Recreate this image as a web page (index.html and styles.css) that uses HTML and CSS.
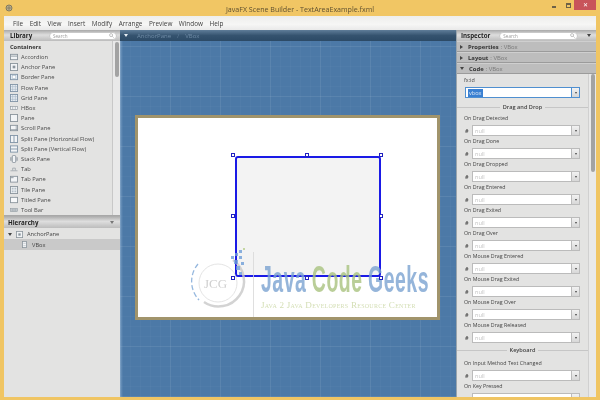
FILE: index.html
```html
<!DOCTYPE html>
<html lang="en">
<head>
<meta charset="utf-8">
<title>JavaFX Scene Builder</title>
<link rel="stylesheet" href="styles.css">
</head>
<body>
<svg class="defs" width="0" height="0">
  <symbol id="i-box" viewBox="0 0 9 9"><rect x=".5" y=".5" width="8" height="8" fill="#f2f4f6" stroke="#8a949c"/></symbol>
  <symbol id="i-acc" viewBox="0 0 9 9"><rect x=".5" y="1.5" width="8" height="6" fill="#f2f4f6" stroke="#8a949c"/><path d="M1 3.5h7" stroke="#8a949c"/></symbol>
  <symbol id="i-anchor" viewBox="0 0 9 9"><rect x=".5" y=".5" width="8" height="8" fill="#f2f4f6" stroke="#8a949c"/><rect x="3" y="3" width="3" height="3" fill="#8a949c"/></symbol>
  <symbol id="i-border" viewBox="0 0 9 9"><rect x=".5" y="1.5" width="8" height="6" fill="#dfe9f2" stroke="#7f93a6"/><rect x="2.5" y="3" width="4" height="3" fill="#fff" stroke="#9fb0bf" stroke-width=".5"/></symbol>
  <symbol id="i-grid" viewBox="0 0 9 9"><rect x=".5" y=".5" width="8" height="8" fill="#e8eef3" stroke="#7f93a6"/><path d="M3 1v7M6 1v7M1 3h7M1 6h7" stroke="#9fb0bf" stroke-width=".6"/></symbol>
  <symbol id="i-hbox" viewBox="0 0 9 9"><rect x=".5" y="3" width="8" height="3" fill="#f2f4f6" stroke="#8a949c" stroke-width=".7"/><path d="M3 3v3M6 3v3" stroke="#8a949c" stroke-width=".6"/></symbol>
  <symbol id="i-scroll" viewBox="0 0 9 9"><rect x=".5" y="1.5" width="8" height="6" fill="#f2f4f6" stroke="#8a949c"/><path d="M1 6.3h7M7 2v5" stroke="#8a949c" stroke-width=".8"/></symbol>
  <symbol id="i-splith" viewBox="0 0 9 9"><rect x=".5" y=".5" width="8" height="8" fill="#f2f4f6" stroke="#7f93a6"/><path d="M4.5 1v7" stroke="#7f93a6"/></symbol>
  <symbol id="i-splitv" viewBox="0 0 9 9"><rect x=".5" y="1" width="8" height="7" fill="#f2f4f6" stroke="#7f93a6"/><path d="M1 4.5h7" stroke="#7f93a6"/></symbol>
  <symbol id="i-stack" viewBox="0 0 9 9"><rect x="2.5" y=".5" width="4" height="8" rx="1.5" fill="#f2f4f6" stroke="#7f8a94"/><path d="M1 2.5v4M8 2.5v4" stroke="#7f8a94"/></symbol>
  <symbol id="i-tab" viewBox="0 0 9 9"><path d="M3 6V3.5h3V6M.5 6.5h8" fill="none" stroke="#8a949c" stroke-width=".7"/></symbol>
  <symbol id="i-tabpane" viewBox="0 0 9 9"><rect x=".5" y="1.5" width="8" height="6.5" fill="#f2f4f6" stroke="#8a949c"/><path d="M1 3h3" stroke="#8a949c"/></symbol>
  <symbol id="i-tile" viewBox="0 0 9 9"><rect x=".5" y=".5" width="8" height="8" fill="#eef1f3" stroke="#8a949c"/><path d="M2 2h2v2H2zM5 2h2v2H5zM2 5h2v2H2zM5 5h2v2H5z" fill="#b4bfc8"/></symbol>
  <symbol id="i-title" viewBox="0 0 9 9"><rect x=".5" y="1.5" width="8" height="6" fill="#f7f8f9" stroke="#8a949c"/></symbol>
  <symbol id="i-toolbar" viewBox="0 0 9 9"><rect x=".5" y="3" width="8" height="3" fill="#c9ced2" stroke="#8a949c" stroke-width=".6"/><path d="M2.5 3v3M4.5 3v3M6.5 3v3" stroke="#8a949c" stroke-width=".6"/></symbol>
</svg>

<div class="window">
  <header class="titlebar">
    <svg class="app-icon" viewBox="0 0 8 8" width="8" height="8"><circle cx="4" cy="4" r="3" fill="#bdb08a" stroke="#6f6a58" stroke-width=".8"/><path d="M2 4h4M4 2v4" stroke="#6f6a58" stroke-width=".6"/></svg>
    <span class="title-text">JavaFX Scene Builder - TextAreaExample.fxml</span>
    <div class="win-buttons">
      <span class="win-btn"><span class="min-glyph"></span></span>
      <span class="win-btn"><span class="max-glyph"></span></span>
      <span class="win-close">✕</span>
    </div>
  </header>

  <nav class="menubar">
    <span>File</span><span>Edit</span><span>View</span><span>Insert</span><span>Modify</span><span>Arrange</span><span>Preview</span><span>Window</span><span>Help</span>
  </nav>

  <div class="workspace">
    <aside class="left">
      <div class="panel-head">
        <strong>Library</strong>
        <div class="search"><span>Search</span><svg viewBox="0 0 6 6" width="5" height="5"><circle cx="2.5" cy="2.5" r="1.8" fill="none" stroke="#999" stroke-width=".7"/><path d="M4 4l1.6 1.6" stroke="#999" stroke-width=".7"/></svg></div>
      </div>
      <div class="library">
        <div class="lib-list">
          <div class="lib-group">Containers</div>
          <div class="lib-item"><svg><use href="#i-acc"/></svg>Accordion</div>
          <div class="lib-item"><svg><use href="#i-anchor"/></svg>Anchor Pane</div>
          <div class="lib-item"><svg><use href="#i-border"/></svg>Border Pane</div>
          <div class="lib-item"><svg><use href="#i-grid"/></svg>Flow Pane</div>
          <div class="lib-item"><svg><use href="#i-grid"/></svg>Grid Pane</div>
          <div class="lib-item"><svg><use href="#i-hbox"/></svg>HBox</div>
          <div class="lib-item"><svg><use href="#i-box"/></svg>Pane</div>
          <div class="lib-item"><svg><use href="#i-scroll"/></svg>Scroll Pane</div>
          <div class="lib-item"><svg><use href="#i-splith"/></svg>Split Pane (Horizontal Flow)</div>
          <div class="lib-item"><svg><use href="#i-splitv"/></svg>Split Pane (Vertical Flow)</div>
          <div class="lib-item"><svg><use href="#i-stack"/></svg>Stack Pane</div>
          <div class="lib-item"><svg><use href="#i-tab"/></svg>Tab</div>
          <div class="lib-item"><svg><use href="#i-tabpane"/></svg>Tab Pane</div>
          <div class="lib-item"><svg><use href="#i-tile"/></svg>Tile Pane</div>
          <div class="lib-item"><svg><use href="#i-title"/></svg>Titled Pane</div>
          <div class="lib-item"><svg><use href="#i-toolbar"/></svg>Tool Bar</div>
          <div class="lib-item"><svg><use href="#i-box"/></svg></div>
        </div>
        <div class="vscroll"><div class="thumb thumb-lib"></div></div>
      </div>
      <div class="panel-head hier-head">
        <strong>Hierarchy</strong>
        <span class="caret-down"></span>
      </div>
      <div class="tree">
        <div class="tree-row"><span class="caret-down dark"></span><svg><use href="#i-anchor"/></svg>AnchorPane</div>
        <div class="tree-row selected"><svg class="vbox-icon" viewBox="0 0 9 9"><rect x="2" y=".5" width="5" height="8" fill="#f2f4f6" stroke="#8a949c"/><path d="M3 3h3M3 6h3" stroke="#8a949c" stroke-width=".5"/></svg>VBox</div>
      </div>
    </aside>

    <main class="center">
      <div class="crumbs">
        <span class="caret-down light"></span><span>AnchorPane</span><span class="sep">/</span><span>VBox</span>
      </div>
      <div class="canvas">
        <div class="frame">
          <div class="stage">
            <div class="vbox"></div>
            <span class="handle h-tl"></span><span class="handle h-tc"></span><span class="handle h-tr"></span>
            <span class="handle h-ml"></span><span class="handle h-mr"></span>
            <span class="handle h-bl"></span><span class="handle h-bc"></span><span class="handle h-br"></span>
            <div class="watermark">
              <svg class="jcg" viewBox="0 0 62 70" width="62" height="70">
                <path d="M8 18A27 27 0 0 0 9 54" fill="none" stroke="#7ba6d6" stroke-width="1.3" stroke-dasharray="5 2.5"/>
                <path d="M43 14A24 24 0 1 1 14 56" fill="none" stroke="#c9c9c9" stroke-width="2.5"/>
                <circle cx="28" cy="37" r="19" fill="none" stroke="#d4d4d4" stroke-width=".8"/>
                <text x="14" y="42" class="jcg-text">JCG</text>
                <g fill="#6f9fd8"><rect x="41" y="10" width="3" height="3"/><rect x="45" y="7" width="3" height="3"/><rect x="49" y="4" width="3" height="3"/><rect x="44" y="14" width="4" height="4"/><rect x="49" y="10" width="3" height="3"/><rect x="46" y="20" width="4" height="4"/><rect x="51" y="16" width="3" height="3"/><rect x="49" y="26" width="3" height="3"/></g>
                <rect x="53" y="2" width="2" height="2" fill="#b9cf8f"/>
              </svg>
              <span class="wm-rule"></span>
              <div class="wm-text">
                <div class="wm-main"><span class="wm-blue">Java</span> <span class="wm-green">Code</span> <span class="wm-blue">Geeks</span></div>
                <div class="wm-sub">Java 2 Java Developers Resource Center</div>
              </div>
            </div>
          </div>
        </div>
      </div>
    </main>

    <aside class="right">
      <div class="panel-head">
        <strong>Inspector</strong>
        <div class="search insp-search"><span>Search</span><svg viewBox="0 0 6 6" width="5" height="5"><circle cx="2.5" cy="2.5" r="1.8" fill="none" stroke="#999" stroke-width=".7"/><path d="M4 4l1.6 1.6" stroke="#999" stroke-width=".7"/></svg></div>
        <span class="caret-down dark"></span>
      </div>
      <div class="section"><span class="caret-right"></span><b>Properties</b><i>: VBox</i></div>
      <div class="section"><span class="caret-right"></span><b>Layout</b><i>: VBox</i></div>
      <div class="section"><span class="caret-down dark"></span><b>Code</b><i>: VBox</i></div>
      <div class="inspector">
        <div class="insp-list">
          <div class="fx-label">fx:id</div>
          <div class="combo focus"><span class="input"><span class="sel">vbox</span></span><span class="drop"></span></div>
          <div class="divider"><span>Drag and Drop</span></div>
          <div class="prop"><label>On Drag Detected</label><div class="prop-row"><em>#</em><div class="combo"><span class="input">null</span><span class="drop"></span></div></div></div>
          <div class="prop"><label>On Drag Done</label><div class="prop-row"><em>#</em><div class="combo"><span class="input">null</span><span class="drop"></span></div></div></div>
          <div class="prop"><label>On Drag Dropped</label><div class="prop-row"><em>#</em><div class="combo"><span class="input">null</span><span class="drop"></span></div></div></div>
          <div class="prop"><label>On Drag Entered</label><div class="prop-row"><em>#</em><div class="combo"><span class="input">null</span><span class="drop"></span></div></div></div>
          <div class="prop"><label>On Drag Exited</label><div class="prop-row"><em>#</em><div class="combo"><span class="input">null</span><span class="drop"></span></div></div></div>
          <div class="prop"><label>On Drag Over</label><div class="prop-row"><em>#</em><div class="combo"><span class="input">null</span><span class="drop"></span></div></div></div>
          <div class="prop"><label>On Mouse Drag Entered</label><div class="prop-row"><em>#</em><div class="combo"><span class="input">null</span><span class="drop"></span></div></div></div>
          <div class="prop"><label>On Mouse Drag Exited</label><div class="prop-row"><em>#</em><div class="combo"><span class="input">null</span><span class="drop"></span></div></div></div>
          <div class="prop"><label>On Mouse Drag Over</label><div class="prop-row"><em>#</em><div class="combo"><span class="input">null</span><span class="drop"></span></div></div></div>
          <div class="prop"><label>On Mouse Drag Released</label><div class="prop-row"><em>#</em><div class="combo"><span class="input">null</span><span class="drop"></span></div></div></div>
          <div class="divider kb"><span>Keyboard</span></div>
          <div class="prop"><label>On Input Method Text Changed</label><div class="prop-row"><em>#</em><div class="combo"><span class="input">null</span><span class="drop"></span></div></div></div>
          <div class="prop"><label>On Key Pressed</label><div class="prop-row"><em></em><div class="combo"><span class="input"></span><span class="drop"></span></div></div></div>
        </div>
        <div class="vscroll insp-scroll"><div class="thumb thumb-insp"></div></div>
      </div>
    </aside>
  </div>
</div>
</body>
</html>
```
FILE: styles.css
```css
* { box-sizing: border-box; }
html, body { margin: 0; padding: 0; }
body { width: 600px; height: 400px; overflow: hidden; font-family: "Open Sans", "Liberation Sans", sans-serif; font-size: 6px; color: #3c3c3c; }
.defs { position: absolute; }

.window { width: 600px; height: 400px; display: flex; flex-direction: column; background: #f0c563; padding: 0 4px 3px 4px; filter: blur(.35px); }

.titlebar { height: 16px; flex: none; position: relative; display: flex; align-items: center; justify-content: center; margin: 0 -4px; padding-top: 1px; background: #f1c664; }
.app-icon { position: absolute; left: 5px; top: 4px; }
.title-text { font-size: 7.1px; color: #5f5030; }
.win-buttons { position: absolute; right: 4px; top: 0; display: flex; align-items: flex-start; }
.win-btn { width: 14px; height: 10px; display: flex; align-items: center; justify-content: center; }
.min-glyph { width: 4px; height: 2px; margin-top: 3px; background: #6e6247; }
.max-glyph { width: 5px; height: 5px; border: 1px solid #6e6247; border-top-width: 2px; }
.win-close { width: 22px; height: 10px; background: #c8545a; color: #fff; font-size: 5.5px; line-height: 10px; text-align: center; margin-left: -1px; }

.menubar { height: 14px; flex: none; display: flex; align-items: center; padding-left: 9px; gap: 6.5px; background: linear-gradient(#eeeeec, #f6f6f5 60%, #e9e9e9); color: #3d3d3d; font-size: 6.4px; }

.workspace { flex: 1; min-height: 0; display: grid; grid-template-columns: 116px 336px 140px; }

.left, .right { display: flex; flex-direction: column; background: #e3e3e2; min-height: 0; overflow: hidden; }
.panel-head { height: 11px; flex: none; display: flex; align-items: center; padding: 0 3px 0 6px; background: linear-gradient(#a9a9a9, #dedede 45%, #bcbcbc); color: #222; font-size: 6.2px; }
.panel-head strong { width: 39px; font-weight: 700; }
.search { width: 68px; height: 8px; border-radius: 4px; background: #fff; border: 1px solid #c8c8c8; display: flex; align-items: center; justify-content: space-between; padding: 0 2px 0 3px; color: #9a9a9a; font-size: 4.6px; }

.library { height: 175px; flex: none; display: flex; border-bottom: 1px solid #a8a8a8; overflow: hidden; }
.lib-list { flex: 1; padding: 1px 0 0 6px; overflow: hidden; border-right: 1px solid #c8c8c8; }
.lib-group { height: 10px; line-height: 10px; font-weight: 700; font-size: 5.7px; color: #333; }
.lib-item { height: 10.2px; display: flex; align-items: center; gap: 3px; color: #4a4a4a; font-size: 5.75px; white-space: nowrap; }
.lib-item svg { width: 8px; height: 8px; flex: none; }

.vscroll { width: 7px; flex: none; background: #e9e9e9; display: flex; justify-content: center; }
.thumb { width: 4px; background: #a3a3a3; border-radius: 2px; }
.thumb-lib { height: 35px; margin-top: 1px; }

.hier-head { height: 12px; justify-content: space-between; padding: 0 6px 0 4px; }
.tree { flex: 1; }
.tree-row { height: 10px; margin-top: 1px; display: flex; align-items: center; padding-left: 4px; gap: 4px; font-size: 5.7px; color: #444; }
.tree-row svg { width: 7px; height: 7px; flex: none; }
.tree-row.selected { margin-top: 0; height: 11px; background: #c9c9c9; padding-left: 17px; }

.caret-down { width: 0; height: 0; flex: none; border-left: 2px solid transparent; border-right: 2px solid transparent; border-top: 3px solid #777; }
.caret-down.dark { border-top-color: #444; }
.caret-down.light { border-top-color: #e8eef4; }
.caret-right { width: 0; height: 0; flex: none; border-top: 2px solid transparent; border-bottom: 2px solid transparent; border-left: 3px solid #444; }

.center { display: flex; flex-direction: column; min-width: 0; min-height: 0; }
.crumbs { height: 11px; flex: none; display: flex; align-items: center; gap: 6px; padding-left: 4px; background: linear-gradient(#5f7d99, #35536f 50%, #2c4a66); color: #6f8ba6; font-size: 6px; }
.crumbs .light { margin-right: 3px; }
.sep { color: #5e7a95; }

.canvas { flex: 1; display: flex; align-items: center; justify-content: center; padding: 0 1px 3px 0;
  background-color: #4c79a7;
  background-image:
    linear-gradient(90deg, rgba(160,190,220,.5), rgba(160,190,220,0) 3px),
    repeating-linear-gradient(90deg, rgba(255,255,255,.06) 0 1px, transparent 1px 50px),
    repeating-linear-gradient(0deg, rgba(255,255,255,.06) 0 1px, transparent 1px 50px),
    repeating-linear-gradient(90deg, rgba(255,255,255,.025) 0 1px, transparent 1px 10px),
    repeating-linear-gradient(0deg, rgba(255,255,255,.025) 0 1px, transparent 1px 10px);
}
.frame { width: 305px; height: 205px; flex: none; border: 3px solid #a1946b; background: #fff; }
.stage { position: relative; width: 100%; height: 100%; background: #fff; }
.vbox { position: absolute; left: 97px; top: 38px; width: 146px; height: 121px; border: 2.5px solid #1a1ae6; border-radius: 3px; background: #f3f3f3; }
.handle { position: absolute; width: 4px; height: 4px; background: #fff; border: 1px solid #2020c0; z-index: 3; }
.h-tl { left: 93px; top: 35px; } .h-tc { left: 167px; top: 35px; } .h-tr { left: 241px; top: 35px; }
.h-ml { left: 93px; top: 96px; } .h-mr { left: 241px; top: 96px; }
.h-bl { left: 93px; top: 158px; } .h-bc { left: 167px; top: 158px; } .h-br { left: 241px; top: 158px; }

.watermark { position: absolute; left: 52px; top: 128px; display: flex; align-items: flex-start; opacity: .8; z-index: 2; pointer-events: none; }
.jcg { flex: none; }
.jcg-text { font-family: "Liberation Serif", serif; font-size: 13px; fill: #c4c4c4; }
.wm-rule { width: 1px; height: 65px; margin: 6px 0 0 1px; background: #d8d8d8; flex: none; }
.wm-text { width: 167px; margin-left: 7px; padding-top: 19px; white-space: nowrap; }
.wm-main { width: 310px; height: 30px; transform: scaleX(.54); transform-origin: left center; font-family: "Liberation Sans", sans-serif; font-weight: 700; font-size: 36px; line-height: 30px; word-spacing: -1px; letter-spacing: 1px; }
.wm-blue { color: #7ba3d1; }
.wm-green { color: #a9c37f; }
.wm-sub { font-family: "Liberation Serif", serif; font-variant: small-caps; font-size: 9.1px; line-height: 9px; color: #c9d6a2; letter-spacing: .25px; margin-top: 6px; }

.right { border-left: 1px solid #9aa5ad; }
.right .panel-head { justify-content: flex-start; padding: 0 5px 0 4px; }
.insp-search { width: 80px; margin-right: 9px; }
.section { height: 11px; flex: none; display: flex; align-items: center; padding: 0 0 0 3px; background: #bdbdbd; border-bottom: 1px solid #9b9b9b; border-top: 1px solid #cfcfcf; font-size: 5.9px; color: #333; }
.section b { margin-left: 5px; font-weight: 700; }
.section i { font-style: normal; margin-left: 2px; color: #777; }

.inspector { flex: 1; min-height: 0; display: flex; overflow: hidden; }
.insp-list { flex: 1; min-width: 0; overflow: hidden; padding: 3px 0 0 7px; border-right: 1px solid #d0d0d0; }
.fx-label { height: 7px; line-height: 7px; font-size: 5.4px; color: #444; }
.combo { display: flex; height: 11px; flex: 1; width: 115px; margin-top: 2px; background: #fff; }
.fx-label + .combo { margin: 3px 0 0 1px; }
.input { flex: 1; display: flex; align-items: center; padding-left: 2px; border: 1px solid #bbb; color: #c2c2c2; font-size: 5.6px; min-width: 0; }
.drop { width: 8px; flex: none; border: 1px solid #bbb; border-left: 0; background: linear-gradient(#f2f2f2, #d7d7d7); display: flex; align-items: center; justify-content: center; }
.drop::after { content: ""; border-left: 1.5px solid transparent; border-right: 1.5px solid transparent; border-top: 2.5px solid #444; }
.focus .input, .focus .drop { border-color: #4f8fd0; }
.sel { background: #3a80d2; color: #dbe7f5; padding: 0 1px; }

.divider { position: relative; display: flex; align-items: center; justify-content: center; height: 9px; margin: 4px 0 3px -7px; font-size: 5.6px; font-weight: 600; color: #444; }
.divider::before { content: ""; position: absolute; left: 0; right: 0; top: 50%; border-top: 1px solid #c6c6c6; }
.divider span { position: relative; background: #e3e3e2; padding: 0 3px; }
.divider.kb { margin: 1.5px 0 4.5px -7px; }

.prop { height: 23px; display: flex; flex-direction: column; }
.prop label { height: 8px; line-height: 8px; font-size: 5.3px; color: #444; white-space: nowrap; }
.prop-row { display: flex; align-items: center; }
.prop-row em { width: 8px; flex: none; font-style: normal; font-size: 5.5px; font-weight: 700; padding-left: 1px; margin-top: 3px; color: #555; }
.prop-row .combo { flex: none; width: 108px; height: 11px; margin-top: 3px; }

.insp-scroll { width: 7px; }
.thumb-insp { height: 98px; margin-top: 0; }
```
